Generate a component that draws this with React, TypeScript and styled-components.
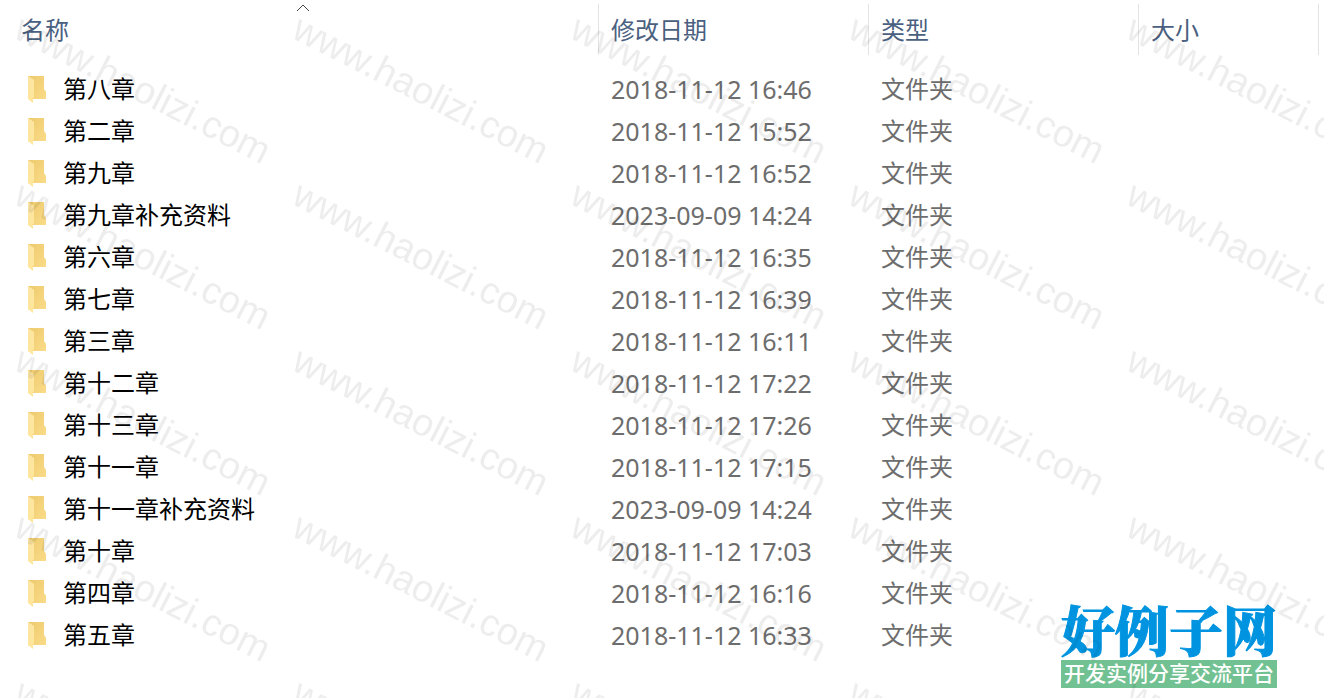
import React from "react";
import styled, { createGlobalStyle } from "styled-components";

const GlobalStyle = createGlobalStyle`
  *, *::before, *::after { box-sizing: border-box; }
  body {
    margin: 0;
    background: #fff;
    font-family: "Noto Sans", "Noto Sans CJK SC", sans-serif;
  }
`;

const Page = styled.main`
  position: relative;
  min-height: 100vh;
  padding-top: 4px;
  overflow: hidden;
  background: #fff;
`;

const FileTable = styled.table`
  width: 100%;
  table-layout: fixed;
  border-collapse: separate;
  border-spacing: 0;
  font-size: 24px;
  line-height: 42px;
`;

const Column = styled.col<{ $width?: number }>`
  width: ${(p) => (p.$width ? `${p.$width}px` : "auto")};
`;

const HeadCell = styled.th<{ $first?: boolean }>`
  position: relative;
  height: 51px;
  padding: 0 0 0 ${(p) => (p.$first ? 21 : 12)}px;
  border-right: 1px solid #e3e3e3;
  text-align: left;
  vertical-align: middle;
  font-weight: 400;
`;

const SortButton = styled.button`
  display: block;
  width: 100%;
  padding: 0;
  border: 0;
  background: none;
  color: #4a6080;
  font: inherit;
  line-height: 51px;
  text-align: left;
`;

const SortMark = styled.svg`
  position: absolute;
  top: 0;
  left: calc(50% - 3px);
  width: 14px;
  height: 8px;
`;

const Body = styled.tbody`
  &::before {
    content: "";
    display: block;
    height: 13px;
  }
`;

const Cell = styled.td`
  height: 42px;
  padding: 0 0 0 12px;
  color: #6d6d6d;
  white-space: nowrap;
`;

const NameCell = styled(Cell)`
  padding-left: 28px;
  color: #000;
`;

const DateCell = styled(Cell)`
  font-size: 25px;
`;

const NameContent = styled.div`
  display: flex;
  align-items: center;
  gap: 16px;
`;

const FolderSvg = styled.svg`
  flex: none;
  width: 19px;
  height: 28px;
`;

const Watermark = styled.svg`
  position: absolute;
  inset: 0;
  width: 100%;
  height: 100%;
  pointer-events: none;
`;

const Brand = styled.aside`
  position: absolute;
  right: 47px;
  bottom: 10px;
  width: 216px;
`;

const BrandName = styled.div`
  padding-bottom: 4px;
  color: #0094e0;
  font: 900 54px/54px "Noto Serif CJK SC", "Noto Sans CJK SC", serif;
  -webkit-text-stroke: 1px #0094e0;
  white-space: nowrap;
`;

const BrandTagline = styled.div`
  padding-bottom: 2px;
  background: #72c192;
  color: #fff;
  font-size: 21px;
  font-weight: 500;
  line-height: 26px;
  text-align: center;
  white-space: nowrap;
`;

const files: [string, string][] = [
  ["第八章", "2018-11-12 16:46"],
  ["第二章", "2018-11-12 15:52"],
  ["第九章", "2018-11-12 16:52"],
  ["第九章补充资料", "2023-09-09 14:24"],
  ["第六章", "2018-11-12 16:35"],
  ["第七章", "2018-11-12 16:39"],
  ["第三章", "2018-11-12 16:11"],
  ["第十二章", "2018-11-12 17:22"],
  ["第十三章", "2018-11-12 17:26"],
  ["第十一章", "2018-11-12 17:15"],
  ["第十一章补充资料", "2023-09-09 14:24"],
  ["第十章", "2018-11-12 17:03"],
  ["第四章", "2018-11-12 16:16"],
  ["第五章", "2018-11-12 16:33"],
];

const Folder = () => (
  <FolderSvg viewBox="0 0 19 28" aria-hidden="true">
    <defs>
      <linearGradient id="folder-back" x1="0" y1="0" x2="1" y2="1">
        <stop offset="0" stopColor="#edca6d" />
        <stop offset="1" stopColor="#fadb88" />
      </linearGradient>
      <linearGradient id="folder-front" x1="0" y1="0" x2="0" y2="1">
        <stop offset="0" stopColor="#fde6a4" />
        <stop offset="1" stopColor="#ffe69a" />
      </linearGradient>
    </defs>
    <path d="M0 1H16V14L18 17V24H0Z" fill="url(#folder-back)" />
    <path d="M0 1L6 5V22L5 23V28L0 24Z" fill="url(#folder-front)" />
  </FolderSvg>
);

export default function App() {
  return (
    <>
      <GlobalStyle />
      <Page>
        <FileTable>
          <colgroup>
            <Column $width={599} />
            <Column $width={270} />
            <Column $width={270} />
            <Column $width={180} />
            <Column />
          </colgroup>
          <thead>
            <tr>
              <HeadCell $first aria-sort="ascending">
                <SortButton type="button">名称</SortButton>
                <SortMark viewBox="0 0 14 8" aria-hidden="true">
                  <path d="M1 7L7 1L13 7" fill="none" stroke="#444" />
                </SortMark>
              </HeadCell>
              <HeadCell><SortButton type="button">修改日期</SortButton></HeadCell>
              <HeadCell><SortButton type="button">类型</SortButton></HeadCell>
              <HeadCell><SortButton type="button">大小</SortButton></HeadCell>
            </tr>
          </thead>
          <Body>
            {files.map(([name, date]) => (
              <tr key={name}>
                <NameCell>
                  <NameContent>
                    <Folder />
                    {name}
                  </NameContent>
                </NameCell>
                <DateCell>{date}</DateCell>
                <Cell>文件夹</Cell>
                <Cell />
              </tr>
            ))}
          </Body>
        </FileTable>
        <Brand>
          <BrandName>好例子网</BrandName>
          <BrandTagline>开发实例分享交流平台</BrandTagline>
        </Brand>
        <Watermark aria-hidden="true">
          <defs>
            <pattern id="site-mark" width="278" height="166" patternUnits="userSpaceOnUse">
              <text
                transform="translate(12 37) rotate(27)"
                fill="#000"
                fillOpacity="0.07"
                fontFamily="Liberation Sans, sans-serif"
                fontSize="38"
              >
                www.haolizi.com
              </text>
            </pattern>
          </defs>
          <rect width="100%" height="100%" fill="url(#site-mark)" />
        </Watermark>
      </Page>
    </>
  );
}
